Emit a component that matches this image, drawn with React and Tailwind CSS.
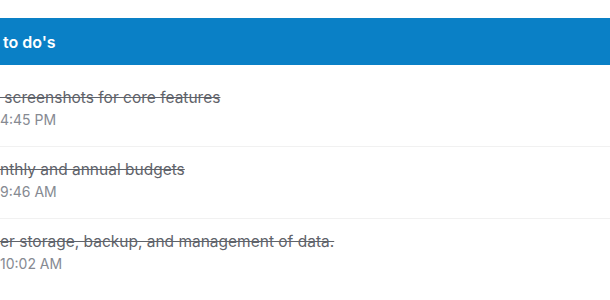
import React from "react";

const todos = [
  { title: "\u00a0screenshots for core features", time: "4:45 PM" },
  { title: "nthly and annual budgets", time: "9:46 AM" },
  { title: "er storage, backup, and management of data.", time: "10:02 AM" },
];

const App = () => {
  return (
    <div
      className="w-[610px] h-[300px] overflow-hidden bg-white pt-[18px]"
      style={{ fontFamily: "Inter, 'Noto Sans', sans-serif" }}
    >
      <div className="h-[47px] flex items-center bg-[#0a80c6] pl-[3px]">
        <h2 className="text-[16px] font-semibold text-white">to do's</h2>
      </div>

      <ul className="mt-[10px]">
        {todos.map((todo, i) => (
          <li
            key={i}
            className="pt-[12px] pb-[15px] border-b border-[#f1f1f1] last:border-b-0"
          >
            <p className="text-[15.5px] leading-[22px] text-[#5f636a] line-through">
              {todo.title}
            </p>
            <p className="text-[14px] leading-[22px] text-[#868a92]">
              {todo.time}
            </p>
          </li>
        ))}
      </ul>
    </div>
  );
};

export default App;
